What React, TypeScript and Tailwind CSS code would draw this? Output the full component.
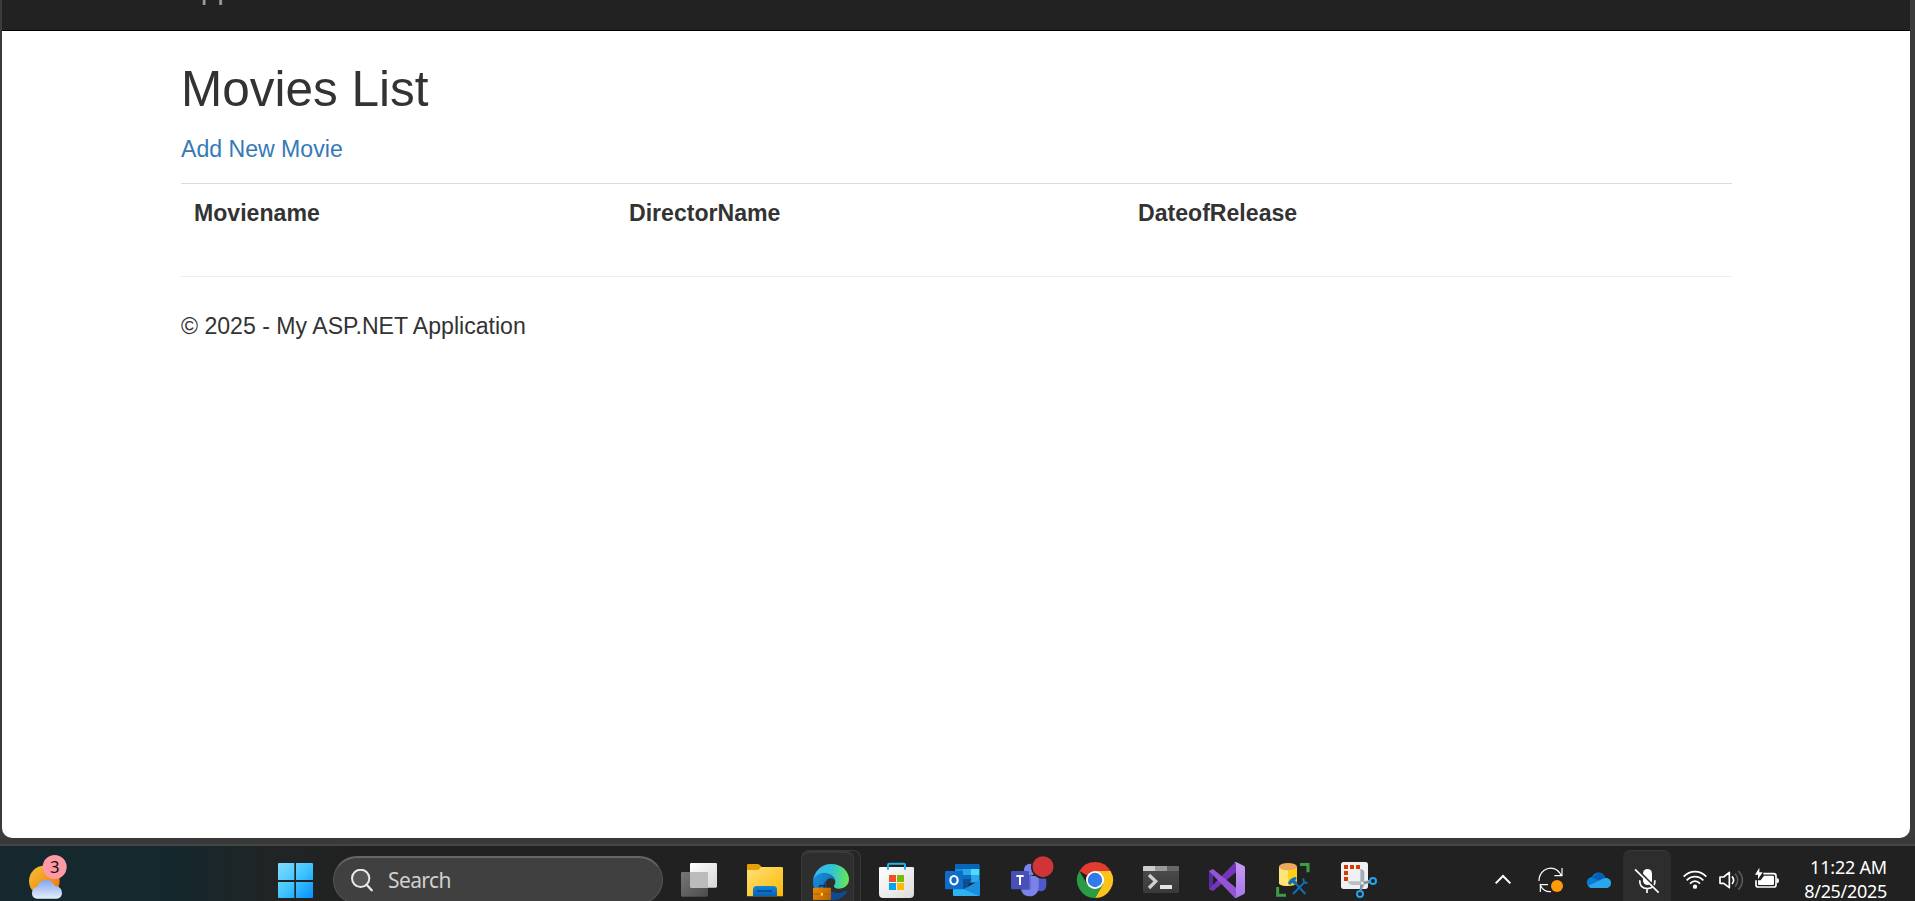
import React from "react";

type IconProps = { children: React.ReactNode; className?: string };

function AppIcon({ children, className = "" }: IconProps) {
  return (
    <svg viewBox="0 0 108 108" className={`h-9 w-9 shrink-0 overflow-visible ${className}`} fill="none">
      {children}
    </svg>
  );
}

function WeatherIcon() {
  return (
    <svg viewBox="0 0 114 132" className="-mt-1.5 h-11 w-[38px] shrink-0 overflow-visible" fill="none">
      <defs>
        <linearGradient id="sun" x1="0" y1="0" x2="1" y2="1">
          <stop offset="0.1" stopColor="#f3bd2f" />
          <stop offset="0.9" stopColor="#f07413" />
        </linearGradient>
        <linearGradient id="cloud" x1="0" y1="0" x2="0" y2="1">
          <stop stopColor="#83a6f0" />
          <stop offset="1" stopColor="#e6eefb" />
        </linearGradient>
      </defs>
      <circle cx="46" cy="78" r="46" fill="url(#sun)" />
      <path d="M24 131a15 15 0 0 1-15-15c0-14 8-20 17-20 2-12 12-21 25-21s22 7 26 18c14 0 22 9 22 22 0 9-7 16-16 16z" fill="url(#cloud)" />
      <path d="M53 106c8-2 13-10 24-13M26 96c8 0 14 5 17 10" stroke="#a9c1f3" strokeWidth="3" />
      <circle cx="77" cy="36" r="36" fill="#ff99a4" />
      <text x="77" y="53" textAnchor="middle" fontSize="50" fill="#111" fontFamily="Noto Sans, sans-serif">3</text>
    </svg>
  );
}

function StartIcon() {
  return (
    <AppIcon>
      <defs>
        <linearGradient id="win" x1="0" y1="3" x2="108" y2="108" gradientUnits="userSpaceOnUse">
          <stop stopColor="#86dcff" />
          <stop offset="0.5" stopColor="#42c6ff" />
          <stop offset="1" stopColor="#058fff" />
        </linearGradient>
      </defs>
      <path d="M6 3h46v51H3V6q0-3 3-3zM57 3h48q3 0 3 3v48H57zM3 60h49v48H6q-3 0-3-3zM57 60h51v45q0 3-3 3H57z" fill="url(#win)" />
    </AppIcon>
  );
}

function TaskViewIcon() {
  return (
    <AppIcon>
      <defs>
        <linearGradient id="tvb" x1="0" y1="0" x2="1" y2="1">
          <stop stopColor="#fff" />
          <stop offset="1" stopColor="#d6d6d6" />
        </linearGradient>
        <linearGradient id="tvf" x1="0" y1="0" x2="1" y2="1">
          <stop stopColor="#777" />
          <stop offset="1" stopColor="#4c4c4c" />
        </linearGradient>
      </defs>
      <rect y="30" width="81" height="74" rx="4" fill="url(#tvf)" />
      <rect x="27" y="3" width="81" height="74" rx="4" fill="url(#tvb)" />
      <path d="M27 30h54v47H31q-4 0-4-4z" fill="#bcbcbc" />
    </AppIcon>
  );
}

function FolderIcon() {
  return (
    <AppIcon>
      <defs>
        <linearGradient id="fold" x1="0" y1="0" x2="1" y2="1">
          <stop stopColor="#ffe07a" />
          <stop offset="1" stopColor="#fcb900" />
        </linearGradient>
        <linearGradient id="foldb" x1="0" y1="0" x2="0" y2="1">
          <stop stopColor="#1484dc" />
          <stop offset="1" stopColor="#0862b5" />
        </linearGradient>
      </defs>
      <path d="M0 9q0-3 4-3h27q5 0 8 4l6 6v20H0z" fill="#e3a008" />
      <path d="M0 24h29q5 0 9-4l4-5h62q4 0 4 4v84H0z" fill="url(#fold)" />
      <path d="M18 103V83q0-11 11-11h50q11 0 11 11v20z" fill="url(#foldb)" />
      <path d="M31 87h43" stroke="#044887" strokeWidth="4" strokeLinecap="round" />
    </AppIcon>
  );
}

function EdgeIcon() {
  return (
    <AppIcon>
      <defs>
        <linearGradient id="ed1" x1="0" y1="40" x2="108" y2="50" gradientUnits="userSpaceOnUse">
          <stop stopColor="#35b8ef" />
          <stop offset="0.5" stopColor="#2fc4d8" />
          <stop offset="1" stopColor="#6be84c" />
        </linearGradient>
        <linearGradient id="ed2" x1="0" y1="30" x2="80" y2="100" gradientUnits="userSpaceOnUse">
          <stop stopColor="#1792dc" />
          <stop offset="1" stopColor="#0b58ad" />
        </linearGradient>
        <linearGradient id="bag" x1="0" y1="72" x2="54" y2="108" gradientUnits="userSpaceOnUse">
          <stop stopColor="#e88b09" />
          <stop offset="1" stopColor="#b65f00" />
        </linearGradient>
      </defs>
      <path d="M0 52C2 22 26 0 54 0c32 0 54 22 54 45 0 19-14 29-31 29-10 0-15-4-14-8 1-5 4-6 4-13 0-12-14-25-33-25C16 28 4 39 0 52z" fill="url(#ed1)" />
      <path d="M0 54C3 37 17 27 35 28c18 1 31 12 32 23-5-10-20-12-26-2-11 18 8 39 33 39 11 0 19-4 24-7 3-1 4 1 3 3-9 15-25 24-47 24C22 108 0 84 0 54z" fill="url(#ed2)" />
      <path d="M41 49c-11 18 8 39 33 39 11 0 19-4 24-7 3-1 4 1 3 3-9 15-25 24-47 24-23-9-34-44-13-59z" fill="#114a94" />
      <path d="M19 70v-1q0-4 4-4h9q4 0 4 4v1" stroke="#252525" strokeWidth="4" />
      <rect y="71" width="54" height="37" rx="3" fill="url(#bag)" />
      <path d="M0 90h54" stroke="#9e5200" strokeWidth="2" />
      <rect x="23" y="87" width="7" height="8" fill="#ffd83c" />
    </AppIcon>
  );
}

function StoreIcon() {
  return (
    <AppIcon>
      <defs>
        <linearGradient id="store" x1="0" y1="0" x2="1" y2="1">
          <stop stopColor="#fff" />
          <stop offset="1" stopColor="#dcdcdc" />
        </linearGradient>
      </defs>
      <path d="M0 19q0-4 4-4h97q4 0 4 4v76q0 13-13 13H13Q0 108 0 95z" fill="url(#store)" />
      <path d="M27 23V9q0-4 4-4h43q4 0 4 4v14" stroke="#22b2ec" strokeWidth="6" />
      <path d="M30 39h21v21H30z" fill="#f25022" />
      <path d="M54 39h21v21H54z" fill="#7fba00" />
      <path d="M30 63h21v21H30z" fill="#00a4ef" />
      <path d="M54 63h21v21H54z" fill="#ffb900" />
    </AppIcon>
  );
}

function OutlookIcon() {
  return (
    <AppIcon>
      <path d="M30 10q0-4 4-4h65q4 0 4 4v52H30z" fill="#1490df" />
      <path d="M30 21V10q0-4 4-4h65q4 0 4 4v11z" fill="#0a66b5" />
      <path d="M54 21h24v18H54z" fill="#28a8ea" />
      <path d="M78 21h25v18H78z" fill="#50d9ff" />
      <path d="M54 39h24v20H54z" fill="#0b6cbd" />
      <path d="M78 39h25v20H78z" fill="#28a8ea" />
      <path d="M30 52h50L64 80H30z" fill="#0a4f93" />
      <path d="M105 54v44q0 4-4 4H28q-4 0-4-4V80h34z" fill="#1a8fdd" />
      <path d="M24 68l79 34H28q-4 0-4-4z" fill="#2fb3f0" />
      <rect y="27" width="54" height="55" rx="4" fill="#0f6cc9" />
      <ellipse cx="27" cy="54.500" rx="11" ry="12.500" stroke="#fff" strokeWidth="6.500" />
    </AppIcon>
  );
}

function TeamsIcon() {
  return (
    <AppIcon>
      <circle cx="57" cy="23" r="18" fill="#7b83eb" />
      <path d="M74 48h27q5 0 5 5v17c0 11-7 18-17 18s-15-4-17-12z" fill="#5059c9" />
      <path d="M36 42h42q5 0 5 5v27c0 17-11 29-27 29S30 93 29 76z" fill="#7b83eb" />
      <path d="M39 42h20v36q0 6-6 6H31q-3-9-2-18z" fill="#4a50b0" opacity=".6" />
      <rect y="27" width="54" height="55" rx="4" fill="#484fb8" />
      <path d="M16 42h22M27 42v27" stroke="#fff" strokeWidth="6" />
      <circle cx="96" cy="14" r="36" fill="#212121" />
      <circle cx="96" cy="14" r="31.500" fill="#d13438" />
    </AppIcon>
  );
}

function ChromeIcon() {
  return (
    <AppIcon>
      <path d="M54 54 7.200 27A54 54 0 0 1 100.800 27z" fill="#e33b2e" />
      <path d="M54 27h46.800A54 54 0 0 1 54 108l23.400-40.500z" fill="#fcc31e" />
      <path d="M30.600 67.500 7.200 27A54 54 0 0 0 54 108l23.400-40.500z" fill="#2a9c46" />
      <circle cx="54" cy="54" r="27" fill="#fff" />
      <circle cx="54" cy="54" r="21.500" fill="#3279ea" />
    </AppIcon>
  );
}

function TerminalIcon() {
  return (
    <AppIcon>
      <defs>
        <linearGradient id="term" x1="0" y1="0" x2="0" y2="1">
          <stop stopColor="#4e4e4e" />
          <stop offset="1" stopColor="#393939" />
        </linearGradient>
      </defs>
      <rect y="12" width="108" height="81" rx="4" fill="url(#term)" />
      <path d="M0 27V16q0-4 4-4h32v15z" fill="#ccc" />
      <path d="M36 12h36v15H36z" fill="#999" />
      <path d="M72 12h32q4 0 4 4v11H72z" fill="#666" />
      <path d="m18 39 20 19-20 20" stroke="#d0d0d0" strokeWidth="10" />
      <rect x="51" y="69" width="36" height="12" rx="1" fill="#e4e4e4" />
    </AppIcon>
  );
}

function VisualStudioIcon() {
  return (
    <AppIcon>
      <defs>
        <linearGradient id="vs" x1="0" y1="0" x2="0" y2="1">
          <stop stopColor="#c79cf4" />
          <stop offset="1" stopColor="#a877ed" />
        </linearGradient>
      </defs>
      <path d="M0 27 12 21v66L0 81z" fill="#5b2aa0" />
      <path d="M0 81 77 2l4-2v31L12 87z" fill="#7435b8" />
      <path d="M0 27 12 21l69 56v31l-6-3z" fill="#9455d3" />
      <path d="M81 0l23 11q4 2 4 6v74q0 4-4 6l-23 11q-3 0-6-3 5 1 6-3V6q-1-5-6-3 3-3 6-3z" fill="url(#vs)" />
    </AppIcon>
  );
}

function DatabaseIcon() {
  return (
    <AppIcon>
      <path d="M12 14v49c0 12 54 12 54 0V14z" fill="#fcd116" />
      <path d="M12 14v49c0 6 13 9 27 9V14z" fill="#ffe477" />
      <ellipse cx="39" cy="14" rx="27" ry="11" fill="#eea85b" />
      <path d="M75 7.500h24V31M8 75v24.500h25" stroke="#3e9d43" strokeWidth="9" />
      <path d="m54 96 33-34M60 62l31 34" stroke="#1170bd" strokeWidth="6" />
      <path d="M39 64c2-9 11-17 23-19l3 5-5 5 8 7-8 8-8-8-7 7z" fill="#1170bd" />
      <path d="M97 61c-7 4-15-4-11-12" stroke="#1170bd" strokeWidth="6" />
    </AppIcon>
  );
}

function SnipIcon() {
  return (
    <AppIcon>
      <rect width="81" height="81" rx="8" fill="#eef0f3" />
      <path d="M9 9h12v12H9zM27 9h12v12H27zM45 9h12v12H45zM9 27h12v12H9zM9 45h12v12H9z" fill="#d83b01" />
      <path d="M58 21q12 1 12 12v37l-9 14-3-14z" fill="#a3adb7" />
      <path d="M21 58h47l17-4v10l-21 5H34q-11-1-13-11z" fill="#b8bfc7" />
      <path d="M63 64l24-5M63 64l-4 20" stroke="#858f9c" strokeWidth="7" />
      <circle cx="64" cy="64" r="4" fill="#eceff2" />
      <circle cx="96" cy="57" r="9" stroke="#20a5ee" strokeWidth="6" />
      <circle cx="57" cy="96" r="9" stroke="#20a5ee" strokeWidth="6" />
    </AppIcon>
  );
}

function TrayIcon({ children }: { children: React.ReactNode }) {
  return (
    <svg viewBox="0 0 72 72" className="h-6 w-6 shrink-0 overflow-visible" fill="none" stroke="#fff" strokeWidth="5">
      {children}
    </svg>
  );
}

function Tray() {
  return (
    <div className="ml-auto flex h-full shrink-0 items-center pr-7">
      <TrayIcon>
        <path d="m14 46 22-22 22 22" strokeWidth="6" />
      </TrayIcon>
      <div className="ml-6 flex">
        <TrayIcon>
          <path d="M0 39C0 12 24-5 45 2c10 3 16 10 22 20M69 0v23H46M4 72V50h23M5 53c6 12 17 19 31 18" strokeWidth="3.500" />
          <circle cx="54" cy="54" r="18" fill="#ff9a0a" stroke="none" />
        </TrayIcon>
      </div>
      <div className="ml-6 flex">
        <TrayIcon>
          <g stroke="none">
            <path d="M16 59A16 16 0 0 1 15 27C23 9 49 9 55 30c10 0 17 7 17 15 0 9-7 14-15 14z" fill="#087bd5" />
            <path d="M22 24C31 9 51 13 55 30L35 38 16 27z" fill="#075eb5" />
            <path d="M4 53 46 33c4-3 8-3 11-3 9 0 15 7 15 15 0 9-7 15-15 15H16C9 60 6 57 4 53z" fill="#2aa7ea" />
          </g>
        </TrayIcon>
      </div>
      <div className="ml-3 flex h-[60px] w-12 items-center justify-center rounded-lg border-t border-[#3a3a3a] bg-[#2d2d2d]">
        <TrayIcon>
          <rect x="24" y="0" width="27" height="48" rx="13.500" fill="#fff" stroke="none" />
          <path d="M14 34c0 17 10 25 23 25s23-8 23-25M36 59v13" />
          <path d="M3-2l71 73" stroke="#2d2d2d" strokeWidth="8" />
          <path d="m0 1 71 70" strokeWidth="5" />
        </TrayIcon>
      </div>
      <div className="ml-3 flex gap-3">
        <TrayIcon>
          <path d="M2 26c19-20 49-20 68 0M11 37c14-15 36-15 50 0M21 47c9-10 21-10 30 0" strokeWidth="5" />
          <circle cx="36" cy="56" r="6.500" fill="#fff" stroke="none" />
        </TrayIcon>
        <TrayIcon>
          <path d="M3 27h11l17-14v46L14 46H3z" strokeLinejoin="round" />
          <path d="M39 25c6 7 6 16 0 23" />
          <path d="M48 17c11 11 11 27 0 39M58 9c16 16 16 39 0 56" stroke="#595959" />
        </TrayIcon>
        <TrayIcon>
          <path d="M25 17h31q7 0 7 7v26q0 7-7 7H10q-7 0-7-7V37" strokeWidth="5" />
          <path d="M27 23h27q3 0 3 3v22q0 3-3 3H12q-3 0-3-3V37h8zM65 31h2q5 0 5 7t-5 7h-2z" fill="#fff" stroke="none" />
          <path d="M13-1v14h10L9 34V20H0z" fill="#fff" stroke="none" />
        </TrayIcon>
      </div>
      <div className="-mt-[3px] w-27 text-right font-['Noto_Sans',sans-serif] text-[18px] leading-6 whitespace-nowrap text-white">
        <div className="tracking-[-0.2px]">11:22 AM</div>
        <div className="tracking-[-0.3px]">8/25/2025</div>
      </div>
    </div>
  );
}

function Taskbar() {
  return (
    <footer className="h-[57px] shrink-0 overflow-hidden bg-[linear-gradient(90deg,#16282e_0px,#14282e_160px,#212425_280px,#212121_360px)]">
      <div className="h-0.5 bg-[#454747]" />
      <div className="-mt-0.5 flex h-[72px] items-center pl-[29px]">
        <WeatherIcon />
        <div className="ml-[210px] flex">
          <StartIcon />
        </div>
        <div className="ml-5 flex h-12 w-[330px] shrink-0 items-center rounded-full border border-t-2 border-[#535353] border-t-[#666] bg-[#404040] pl-[17px]">
          <svg viewBox="0 0 66 69" className="mb-px h-[23px] w-[22px]" fill="none" stroke="#e8e8e8">
            <circle cx="29" cy="28" r="26" strokeWidth="6" fill="#555" />
            <path d="m47 47 15 17" strokeWidth="7" strokeLinecap="round" />
          </svg>
          <span className="-mt-0.5 ml-[15px] font-['Noto_Sans',sans-serif] text-[21px] leading-6 tracking-[-0.6px] text-[#d0d0d0]">Search</span>
        </div>
        <div className="ml-[18px] flex items-center gap-[30px]">
          <TaskViewIcon />
          <FolderIcon />
          <div className="-mx-3 flex h-[60px] w-[60px] rounded-lg border-t border-r border-[#3a3a3a] bg-[#262626]">
            <div className="flex w-[53px] items-center rounded-lg border border-t-2 border-b-0 border-[#3a3a3a] bg-[#2e2e2e] pl-[11px]">
              <EdgeIcon />
            </div>
          </div>
          <StoreIcon />
          <OutlookIcon />
          <TeamsIcon />
          <ChromeIcon />
          <TerminalIcon />
          <VisualStudioIcon />
          <DatabaseIcon />
          <SnipIcon />
        </div>
        <Tray />
      </div>
    </footer>
  );
}

function MoviesPage() {
  return (
    <div className="mr-[5px] ml-0.5 h-[838px] shrink-0 overflow-hidden rounded-b-[10px] bg-white font-['Liberation_Sans',Arial,sans-serif] text-[23.1px] leading-[33px] text-[#333]">
      <nav className="flow-root h-[31px] border-b border-black bg-[#222] px-[179px]">
        <div className="-mt-[28px] text-[29.7px] leading-[33px] text-[#9d9d9d]">Application name</div>
      </nav>
      <main className="mr-[178px] ml-[179px] pt-[31px]">
        <h2 className="text-[49.5px] leading-[54px] font-medium">Movies List</h2>
        <p className="mt-[17px]">
          <a href="#" className="text-[#337ab7]">Add New Movie</a>
        </p>
        <table className="mt-[17px] w-full table-fixed border-t border-[#ddd] text-left">
          <thead>
            <tr>
              <th className="w-[435px] px-[13px] pt-[13px] pb-[13px] font-bold">Moviename</th>
              <th className="w-[509px] px-[13px] font-bold">DirectorName</th>
              <th className="px-[13px] font-bold">DateofRelease</th>
            </tr>
          </thead>
        </table>
        <hr className="mt-[33px] border-[#eee]" />
        <p className="mt-[33px]">© 2025 - My ASP.NET Application</p>
      </main>
    </div>
  );
}

export default function App() {
  return (
    <div className="flex h-[901px] w-full flex-col overflow-hidden bg-[#3b3b3b]">
      <MoviesPage />
      <div className="h-1.5 shrink-0 bg-[#393939]" />
      <Taskbar />
    </div>
  );
}
